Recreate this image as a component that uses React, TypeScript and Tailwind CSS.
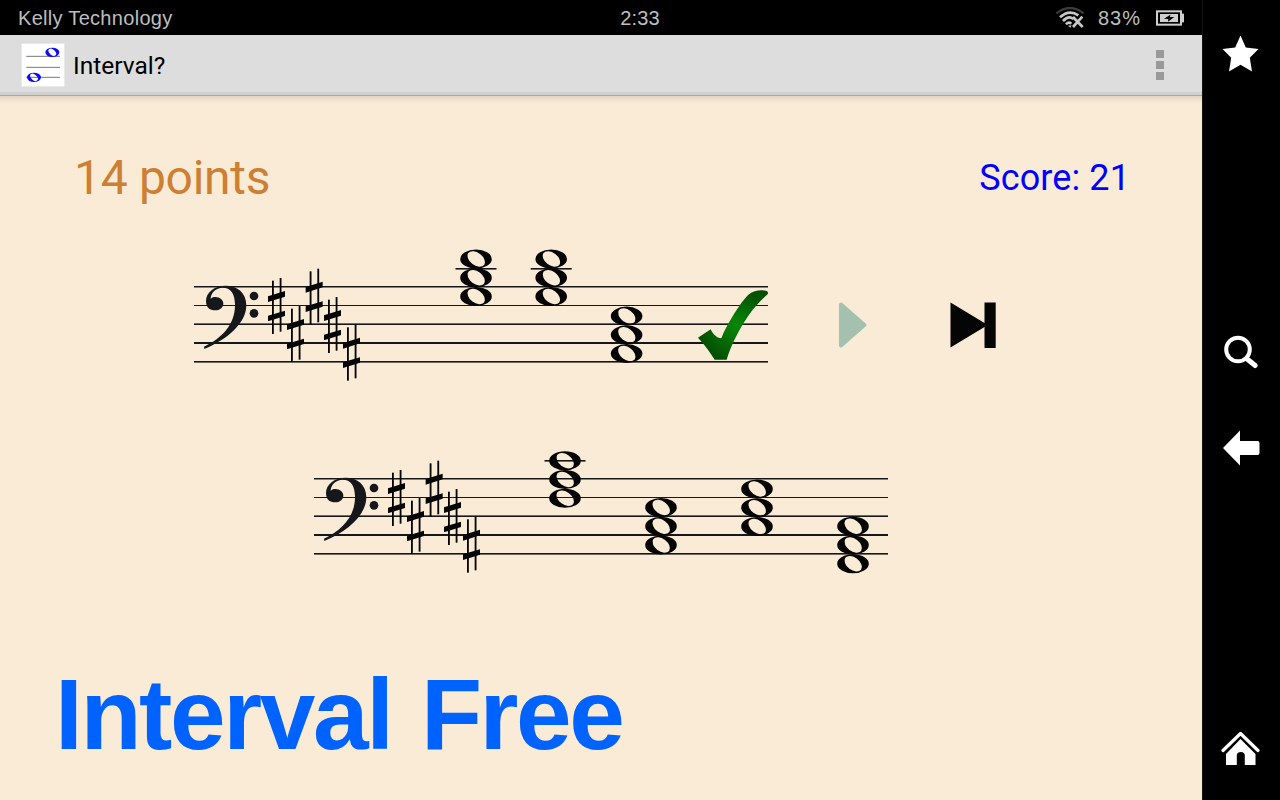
import React from 'react';

type Chord = { x: number; y: number; ledger?: boolean };

interface StaffProps {
  chords: Chord[];
  correct?: boolean;
}

const LINE_GAP = 18.75;

const staffLines = [
  { y: 46, height: 1.5 },
  { y: 65, height: 1 },
  { y: 83.4, height: 1.6 },
  { y: 102, height: 2 },
  { y: 121, height: 1.6 },
];

// B major key signature
const sharps = [
  { x: 264, y: 114 },
  { x: 321, y: 198 },
  { x: 377, y: 86 },
  { x: 432, y: 171 },
  { x: 489, y: 254 },
];

const WholeNote = ({ x, y }: { x: number; y: number }) => (
  <path
    transform={`translate(${x} ${y})`}
    fillRule="evenodd"
    fill="#050505"
    d="M-15.8 0A15.8 9.5 0 0 1 15.8 0A15.8 9.5 0 0 1 -15.8 0ZM-7.7 -6A9.9 6.6 37 0 0 8.1 5.9A9.9 6.6 37 0 0 -7.7 -6Z"
  />
);

const Sharp = ({ x, y }: { x: number; y: number }) => (
  <g transform={`translate(${x} ${y})`} fill="#050505">
    <rect x="12" y="8" width="5.5" height="160" />
    <rect x="35" y="0" width="5.5" height="161" />
    <path d="M0 55L51 39V56L0 72ZM0 113L51 98V114L0 130Z" />
  </g>
);

const Staff: React.FC<StaffProps> = ({ chords, correct }) => (
  <svg width="574" height="144" viewBox="0 0 574 144" className="block shrink-0">
    {staffLines.map((line) => (
      <rect key={line.y} x="0" y={line.y} width="574" height={line.height} fill="#15171a" />
    ))}
    <g transform="translate(-14 0) scale(0.33333)">
      <g fill="#15171a">
        <path d="M73 327L72 320C125 295 165 255 165 195C165 160 152 143 128 143C108 143 92 158 92 177C97 171 101 171 106 171C120 171 130 180 130 191C130 203 119 211 106 211C90 211 78 203 78 183C78 157 103 137 137 137C172 137 199 158 199 196C199 250 140 300 73 327Z" />
        <circle cx="222" cy="168" r="13" />
        <circle cx="222" cy="220" r="13" />
      </g>
      {sharps.map((s) => (
        <Sharp key={s.x} x={s.x} y={s.y} />
      ))}
    </g>
    {chords.map((chord) => (
      <g key={chord.x}>
        {chord.ledger && <rect x={chord.x - 20.5} y="28" width="41" height="1.6" fill="#15171a" />}
        <WholeNote x={chord.x} y={chord.y} />
        <WholeNote x={chord.x} y={chord.y + LINE_GAP} />
        <WholeNote x={chord.x} y={chord.y + LINE_GAP * 2} />
      </g>
    ))}
    {correct && (
      <g transform="translate(486 30) scale(0.33333)">
        <defs>
          <radialGradient id="check" gradientUnits="userSpaceOnUse" cx="168" cy="165" r="110">
            <stop offset="0" stopColor="#088808" />
            <stop offset="1" stopColor="#045004" />
          </radialGradient>
        </defs>
        <path
          fill="url(#check)"
          d="M54 203L92 178C98 191 110 205 124 205C140 165 182 95 207 73C222 60 245 59 260 63C264 65 265 69 263 73C215 112 165 190 140 269H104C90 246 75 226 54 203Z"
        />
      </g>
    )}
  </svg>
);

const StatusBar = () => (
  <div className="h-[35px] bg-black text-[#bebebe] font-['Liberation_Sans',sans-serif] text-[20px] leading-[37px] grid grid-cols-3 pl-[18px] pr-[18px]">
    <span className="tracking-[0.3px]">Kelly Technology</span>
    <span className="justify-self-center pl-[78px] tracking-[0.1px]">2:33</span>
    <div className="flex items-center justify-end h-[35px]">
      <svg width="30" height="22" viewBox="0 0 90 66" fill="none" className="mr-[13px]">
        <path d="M4 19Q45 -13 86 19" stroke="#3c3c3c" strokeWidth="7" />
        <path d="M15 31Q42 6 70 25M24 42Q41 24 55 36M33 52Q41 43 49 50" stroke="#c8c8c8" strokeWidth="8" />
        <path d="M39 56L46 62L50 55Z" fill="#c8c8c8" />
        <path d="M54 30L83 60M82 29L54 60" stroke="#c8c8c8" strokeWidth="8" />
      </svg>
      <span className="pt-[2px] tracking-[1px]">83%</span>
      <svg width="28" height="16" viewBox="0 0 84 48" className="ml-[15px]">
        <rect x="3" y="4" width="72" height="40" fill="none" stroke="#cfcfcf" strokeWidth="6" />
        <rect x="78" y="11" width="6" height="26" fill="#cfcfcf" />
        <rect x="12" y="12" width="54" height="24" fill="#cfcfcf" />
        <path d="M24 26L43 14L42 21H55L36 35L37 27Z" fill="#050505" />
      </svg>
    </div>
  </div>
);

const ActionBar = () => (
  <div className="h-[61px] bg-[#dddddd] border-b border-[#aaa7a3] flex flex-col">
    <div className="flex-1 flex items-center pt-[2px] pl-[21px] pr-[38px]">
      <svg width="44" height="44" viewBox="0 0 132 132">
        <rect x="1.5" y="1.5" width="129" height="129" fill="#fff" stroke="#e6e6e6" strokeWidth="2" />
        <path d="M16 40H117M16 73H117M16 103H117" stroke="#777" strokeWidth="3" />
        <g fill="#0a0aff" fillRule="evenodd">
          <path transform="translate(94 28)" d="M-21 0A21 14 0 0 1 21 0A21 14 0 0 1 -21 0ZM-10 -9A13 8 42 0 0 10 9A13 8 42 0 0 -10 -9Z" />
          <path transform="translate(39 103)" d="M-21 0A21 14 0 0 1 21 0A21 14 0 0 1 -21 0ZM-10 -9A13 8 42 0 0 10 9A13 8 42 0 0 -10 -9Z" />
        </g>
      </svg>
      <h1 className="ml-[8px] pt-[3px] font-['Roboto',sans-serif] text-[24.5px] text-black leading-none">Interval?</h1>
      <div className="ml-auto flex flex-col gap-[3px]">
        <span className="size-2 bg-[#999999]" />
        <span className="size-2 bg-[#999999]" />
        <span className="size-2 bg-[#999999]" />
      </div>
    </div>
    <div className="h-[3px] bg-[#d0d0d0]" />
  </div>
);

const NavBar = () => (
  <nav className="w-[78px] bg-black border-l border-[#141414] pr-px flex flex-col items-center text-white">
    <svg width="38" height="38" viewBox="0 0 38 38" className="mt-[35px]" fill="currentColor">
      <path d="M18.5 0.5L23.8 12.5L36.5 14L27.8 22.7L30 36.5L18.5 29.8L7 36.5L9.2 22.7L0.5 14L13.2 12.5Z" />
    </svg>
    <svg width="38" height="38" viewBox="0 0 38 38" className="mt-[261px]" fill="none" stroke="currentColor">
      <circle cx="16" cy="15.5" r="11.8" strokeWidth="4" />
      <path d="M24.5 24.5L33.2 31.5" strokeWidth="5" strokeLinecap="round" />
    </svg>
    <svg width="38" height="38" viewBox="0 0 38 38" className="mt-[57px]" fill="currentColor">
      <path d="M1 19L18 1.5V12H35.5Q37.5 12 37.5 14V24Q37.5 26 35.5 26H18V36.5Z" />
    </svg>
    <svg width="40" height="38" viewBox="0 0 40 38" className="mt-[262px]" fill="currentColor">
      <path d="M2 21.5L19.5 4.5L37 21.5" fill="none" stroke="currentColor" strokeWidth="3.2" strokeLinecap="round" strokeLinejoin="round" />
      <path d="M19.5 10L34.5 25V36H23.8V26.5Q23.8 23 19.8 23Q15.8 23 15.8 26.5V36H5V25Z" />
    </svg>
  </nav>
);

const App: React.FC = () => {
  const question: Chord[] = [
    { x: 282, y: 19, ledger: true },
    { x: 357.2, y: 19, ledger: true },
    { x: 432.6, y: 76.1 },
  ];

  const answers: Chord[] = [
    { x: 251, y: 28.8, ledger: true },
    { x: 347, y: 75.5 },
    { x: 443, y: 57 },
    { x: 539, y: 94.3 },
  ];

  return (
    <div className="w-[1280px] h-[800px] flex overflow-hidden bg-black">
      <div className="w-[1202px] flex flex-col">
        <StatusBar />
        <ActionBar />

        <main className="flex-1 bg-[#faebd7] flex flex-col font-['Roboto',sans-serif]">
          <div className="h-[7px] shrink-0 bg-gradient-to-b from-[#e3d3c1] to-[#faebd7]" />

          <div className="h-[137px] shrink-0 flex items-center justify-between pt-[12px] pl-[74px] pr-[72px]">
            <span className="text-[48px] leading-none tracking-[-0.3px] text-[#cd7f32]">14 points</span>
            <span className="text-[36px] leading-none tracking-[0.1px] text-[#0000ff]">Score: 21</span>
          </div>

          {/* Question staff and playback controls */}
          <div className="flex items-start pl-[194px]">
            <Staff chords={question} correct />
            <svg width="28" height="46" viewBox="0 0 28 46" className="ml-[71px] mt-[62px]">
              <path d="M2 2.5L25.3 23L2 43.5Z" fill="#a4c1af" stroke="#a4c1af" strokeWidth="4" strokeLinejoin="round" />
            </svg>
            <svg width="46" height="46" viewBox="0 0 46 46" className="ml-[83px] mt-[62px]" fill="#050505">
              <path d="M0.5 0.5L34.5 21V0.5H45.7V46H34.5V25L0.5 45.5Z" />
            </svg>
          </div>

          <div className="mt-[48px] pl-[314px]">
            <Staff chords={answers} />
          </div>

          <h2 className="mt-[88px] pl-[55px] font-['Liberation_Sans',sans-serif] text-[100px] leading-none font-bold tracking-[-2.4px] [word-spacing:4px] text-[#0062ff]">
            Interval Free
          </h2>
        </main>
      </div>
      <NavBar />
    </div>
  );
};

export default App;
